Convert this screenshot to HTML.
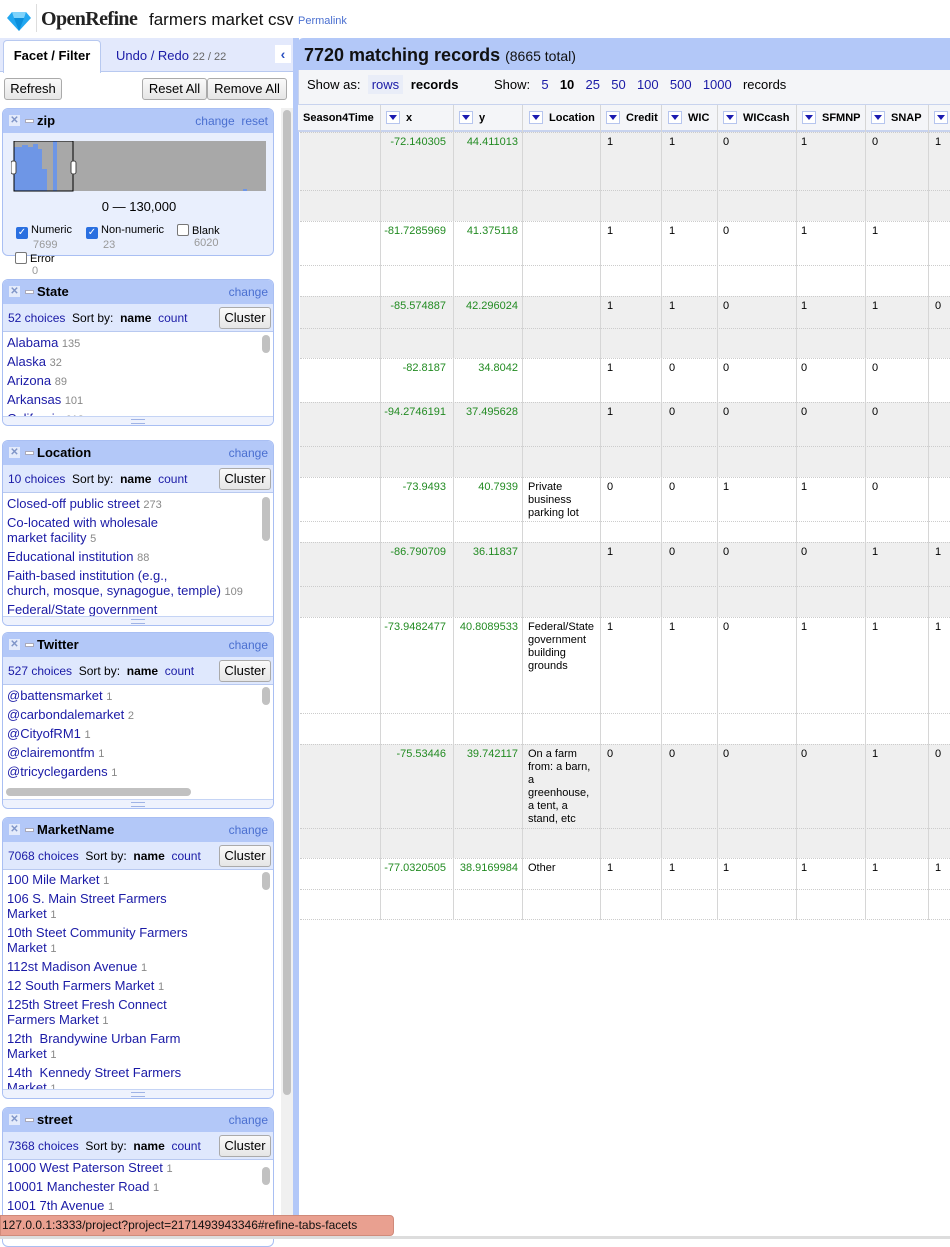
<!DOCTYPE html>
<html><head><meta charset="utf-8"><style>
*{box-sizing:border-box;margin:0;padding:0}
body{width:950px;height:1239px;overflow:hidden;background:#fff;font-family:"Liberation Sans",Arial,sans-serif;font-size:13px;color:#000;position:relative}
.a{position:absolute}
a,.lk{color:#1a1aa6;text-decoration:none}
.btn{position:absolute;height:22px;border:1px solid #aaa;border-radius:3px;background:linear-gradient(#fafafa,#e6e6e6);font-size:13px;line-height:20px;text-align:center;color:#000}
.facet{position:absolute;left:2px;width:272px;border:1px solid #a9bff3;border-radius:6px;background:#fff;overflow:hidden}
.fh{height:24px;background:#b3c8f8;position:relative;font-weight:bold;font-size:13px;line-height:24px;padding-left:34px}
.fh .x{position:absolute;left:6px;top:6px;width:11px;height:11px;background:#e4ebfb;color:#7f95c8;font-size:10px;line-height:11px;text-align:center;font-weight:bold}
.fh .m{position:absolute;left:22px;top:10px;width:9px;height:4px;background:#fff;border:1px solid #aab}
.fh .r{position:absolute;right:5px;top:0;font-weight:normal;font-size:12px;color:#4a6fd0}
.fc{height:28px;background:#dfe8fd;position:relative;font-size:12px;line-height:28px;padding-left:5px;border-bottom:1px solid #b8c9f0}
.fc .cl{position:absolute;right:2px;top:3px;width:52px;height:22px;border:1px solid #aaa;border-radius:3px;background:linear-gradient(#fafafa,#e6e6e6);text-align:center;line-height:20px;font-size:13px;color:#000}
.fl{position:relative;padding:2px 18px 0 4px;overflow:hidden;line-height:15px}
.fl div{margin:0 0 4px;color:#1a1aa6;line-height:15px}
.fl div span{color:#888;font-size:11px;line-height:0}
.vs{position:absolute;right:3px;width:8px;border-radius:4px;background:#c1c1c1;height:18px}
.grip{position:absolute;left:0;right:0;bottom:0;height:9px;background:#eef2fd;border-top:1px solid #c5d4f5}
.grip:after{content:"";position:absolute;left:128px;top:2px;width:14px;height:3px;border-top:1px solid #9fb3e6;border-bottom:1px solid #9fb3e6}
.row{position:absolute;left:300px;width:650px;border-top:1px dotted #ccc}
.g{background:#efefef}
.c{position:absolute;top:4px;font-size:11px;line-height:13px}
.gr{color:#228b22;text-align:right}
.vl{position:absolute;top:105px;height:815px;width:1px;background:#d6d6d6}
.hd{position:absolute;top:105px;height:27px;font-size:11px;font-weight:bold;line-height:27px}
.dd{display:inline-block;width:14px;height:13px;border:1px solid #b6c5ee;background:#fff;vertical-align:-3px;margin-right:6px;position:relative}
.dd:after{content:"";position:absolute;left:2px;top:3px;border-left:4px solid transparent;border-right:4px solid transparent;border-top:5px solid #1a1ab0}
</style></head><body>
<svg class="a" style="left:7px;top:11px" width="24" height="20" viewBox="0 0 24 20"><polygon points="5,1 19,1 24,7 12,20 0,7" fill="#22a7f0"/><polygon points="5,1 19,1 17,7 7,7" fill="#7fd3fb"/><polygon points="7,7 17,7 12,20" fill="#0b8fdc"/></svg>
<div class="a" style="left:36px;top:4px;height:28px;border-left:1px solid #ddd"></div>
<div class="a" style="left:41px;top:8px;font-family:'Liberation Serif',serif;font-weight:bold;font-size:20px;color:#222;letter-spacing:-0.6px">OpenRefine</div>
<div class="a" style="left:149px;top:10px;font-size:17px;color:#111">farmers market csv</div>
<div class="a" style="left:298px;top:15px;font-size:11px;color:#4a6fd0">Permalink</div>

<div class="a" style="left:0;top:38px;width:293px;height:34px;background:#e3e9fc;border-bottom:1px solid #b8c9f0"></div>
<div class="a" style="left:3px;top:40px;width:98px;height:33px;background:#fff;border:1px solid #b8c9f0;border-bottom:none;border-radius:4px 4px 0 0;font-weight:bold;font-size:13px;line-height:30px;text-align:center">Facet / Filter</div>
<div class="a" style="left:116px;top:48px;font-size:13px;color:#1a1aa6">Undo / Redo <span style="color:#666;font-size:11px">22 / 22</span></div>
<div class="a" style="left:275px;top:45px;width:16px;height:18px;background:#fff;color:#2a4fc0;font-weight:bold;font-size:14px;line-height:18px;text-align:center">&#8249;</div>
<div class="a" style="left:0;top:73px;width:293px;height:1166px;background:#fff"></div>
<div class="btn" style="left:4px;top:78px;width:58px">Refresh</div>
<div class="btn" style="left:142px;top:78px;width:65px">Reset All</div>
<div class="btn" style="left:207px;top:78px;width:80px">Remove All</div>
<div class="a" style="left:281px;top:108px;width:12px;height:1131px;background:#f0f0f0"></div>
<div class="a" style="left:283px;top:110px;width:8px;height:985px;border-radius:4px;background:#c1c1c1"></div>
<div class="a" style="left:293px;top:38px;width:6px;height:1201px;background:#b3c8f8"></div>

<div class="facet" style="top:108px;height:148px;background:#e9effd">
<div class="fh"><span class="x">✕</span><span class="m"></span>zip<span class="r">change&nbsp; reset</span></div>
<svg class="a" style="left:8px;top:32px" width="256" height="54"><rect x="3" y="0" width="252" height="50" fill="#a8a8a8"/><path d="M3,6 H11 V4 H17 V6 H22 V3 H27 V8 H31 V28 H36 V50 H3Z M42,0 V50 H46 V0Z" fill="#6e96e6"/><rect x="3" y="0" width="59" height="50" fill="none" stroke="#000" stroke-width="1"/><rect x="0" y="20" width="5" height="13" rx="2" fill="#fff" stroke="#444"/><rect x="60" y="20" width="5" height="13" rx="2" fill="#fff" stroke="#444"/><rect x="232" y="48" width="4" height="2" fill="#6e96e6"/></svg>
<div class="a" style="left:0;width:272px;top:90px;text-align:center;font-size:13px">0 — 130,000</div>
<div class="a" style="left:13px;top:115px;font-size:11px;line-height:12px"><span style="display:inline-block;width:12px;height:12px;background:#2a6fe0;border-radius:2px;color:#fff;font-size:10px;text-align:center;vertical-align:-2px">✓</span> Numeric<br><span style="color:#999;margin-left:17px">7699</span></div>
<div class="a" style="left:83px;top:115px;font-size:11px;line-height:12px"><span style="display:inline-block;width:12px;height:12px;background:#2a6fe0;border-radius:2px;color:#fff;font-size:10px;text-align:center;vertical-align:-2px">✓</span> Non-numeric<br><span style="color:#999;margin-left:17px">23</span></div>
<div class="a" style="left:174px;top:115px;font-size:11px;line-height:12px"><span style="display:inline-block;width:12px;height:12px;border:1px solid #777;border-radius:2px;background:#fff;vertical-align:-2px"></span> Blank<br><span style="color:#999;margin-left:17px">6020</span></div>
</div>
<div class="a" style="left:15px;top:252px;font-size:11px;line-height:12px"><span style="display:inline-block;width:12px;height:12px;border:1px solid #777;border-radius:2px;background:#fff;vertical-align:-2px"></span> Error<br><span style="color:#999;margin-left:17px">0</span></div>

<div class="facet" style="top:279px;height:147px">
<div class="fh"><span class="x">✕</span><span class="m"></span>State<span class="r">change</span></div>
<div class="fc"><span class="lk">52 choices</span>&nbsp; Sort by: &nbsp;<b>name</b>&nbsp; <span class="lk">count</span><span class="cl">Cluster</span></div>
<div class="fl" style="height:86px;padding-top:3px"><div>Alabama <span>135</span></div><div>Alaska <span>32</span></div><div>Arizona <span>89</span></div><div>Arkansas <span>101</span></div><div>California <span>618</span></div><span class="vs" style="top:3px"></span></div>
<div class="grip"></div></div>

<div class="facet" style="top:440px;height:186px">
<div class="fh"><span class="x">✕</span><span class="m"></span>Location<span class="r">change</span></div>
<div class="fc"><span class="lk">10 choices</span>&nbsp; Sort by: &nbsp;<b>name</b>&nbsp; <span class="lk">count</span><span class="cl">Cluster</span></div>
<div class="fl" style="height:125px;padding-top:3px"><div>Closed-off public street <span>273</span></div><div>Co-located with wholesale<br>market facility <span>5</span></div><div>Educational institution <span>88</span></div><div>Faith-based institution (e.g.,<br>church, mosque, synagogue, temple) <span>109</span></div><div>Federal/State government</div><span class="vs" style="top:4px;height:44px"></span></div>
<div class="grip"></div></div>

<div class="facet" style="top:632px;height:177px">
<div class="fh"><span class="x">✕</span><span class="m"></span>Twitter<span class="r">change</span></div>
<div class="fc"><span class="lk">527 choices</span>&nbsp; Sort by: &nbsp;<b>name</b>&nbsp; <span class="lk">count</span><span class="cl">Cluster</span></div>
<div class="fl" style="height:116px;padding-top:3px"><div>@battensmarket <span>1</span></div><div>@carbondalemarket <span>2</span></div><div>@CityofRM1 <span>1</span></div><div>@clairemontfm <span>1</span></div><div>@tricyclegardens <span>1</span></div><div>#Madewithlabels</div><span class="vs" style="top:2px"></span>
<div class="a" style="left:0;right:14px;top:100px;height:14px;background:#fff"></div><div class="a" style="left:3px;top:103px;width:185px;height:8px;border-radius:4px;background:#c1c1c1"></div></div>
<div class="grip"></div></div>

<div class="facet" style="top:817px;height:282px">
<div class="fh"><span class="x">✕</span><span class="m"></span>MarketName<span class="r">change</span></div>
<div class="fc"><span class="lk">7068 choices</span>&nbsp; Sort by: &nbsp;<b>name</b>&nbsp; <span class="lk">count</span><span class="cl">Cluster</span></div>
<div class="fl" style="height:221px;padding-top:2px"><div>100 Mile Market <span>1</span></div><div>106 S. Main Street Farmers<br>Market <span>1</span></div><div>10th Steet Community Farmers<br>Market <span>1</span></div><div>112st Madison Avenue <span>1</span></div><div>12 South Farmers Market <span>1</span></div><div>125th Street Fresh Connect<br>Farmers Market <span>1</span></div><div>12th&nbsp; Brandywine Urban Farm<br>Market <span>1</span></div><div>14th&nbsp; Kennedy Street Farmers<br>Market <span>1</span></div><span class="vs" style="top:2px"></span></div>
<div class="grip"></div></div>

<div class="facet" style="top:1107px;height:140px">
<div class="fh"><span class="x">✕</span><span class="m"></span>street<span class="r">change</span></div>
<div class="fc"><span class="lk">7368 choices</span>&nbsp; Sort by: &nbsp;<b>name</b>&nbsp; <span class="lk">count</span><span class="cl">Cluster</span></div>
<div class="fl" style="height:90px;padding-top:0"><div>1000 West Paterson Street <span>1</span></div><div>10001 Manchester Road <span>1</span></div><div>1001 7th Avenue <span>1</span></div><span class="vs" style="top:7px"></span></div>
</div>

<div class="a" style="left:298px;top:38px;width:652px;height:32px;background:#b3c8f8;border-radius:5px 0 0 0"></div>
<div class="a" style="left:304px;top:45px;font-size:18px;font-weight:bold;color:#111">7720 matching records <span style="font-weight:normal;font-size:14px">(8665 total)</span></div>
<div class="a" style="left:298px;top:70px;width:652px;height:35px;background:#f4f5f8;border-bottom:1px solid #c8d3ee;border-left:1px solid #c8d3ee"></div>
<div class="a" style="left:307px;top:78px;font-size:13px;line-height:14px">Show as: &nbsp;<span class="lk" style="background:#e9edf8;padding:2px 4px">rows</span> <b style="padding:2px 4px">records</b></div>
<div class="a" style="left:494px;top:78px;font-size:13px;line-height:14px;word-spacing:2px">Show: &nbsp;<span class="lk">5</span>&nbsp; <b>10</b>&nbsp; <span class="lk">25</span>&nbsp; <span class="lk">50</span>&nbsp; <span class="lk">100</span>&nbsp; <span class="lk">500</span>&nbsp; <span class="lk">1000</span>&nbsp; records</div>

<div class="a" style="left:298px;top:105px;width:652px;height:27px;background:#f4f5f8;border-bottom:2px solid #c8d3ee"></div>
<div class="hd" style="left:303px">Season4Time</div>
<div class="hd" style="left:386px"><span class="dd"></span>x</div>
<div class="hd" style="left:459px"><span class="dd"></span>y</div>
<div class="hd" style="left:529px"><span class="dd"></span>Location</div>
<div class="hd" style="left:606px"><span class="dd"></span>Credit</div>
<div class="hd" style="left:668px"><span class="dd"></span>WIC</div>
<div class="hd" style="left:723px"><span class="dd"></span>WICcash</div>
<div class="hd" style="left:802px"><span class="dd"></span>SFMNP</div>
<div class="hd" style="left:871px"><span class="dd"></span>SNAP</div>
<div class="hd" style="left:934px"><span class="dd"></span></div>

<div class="row g" style="top:132px;height:58px"></div><div class="row g" style="top:190px;height:31px"></div>
<div class="row" style="top:221px;height:44px"></div><div class="row" style="top:265px;height:31px"></div>
<div class="row g" style="top:296px;height:32px"></div><div class="row g" style="top:328px;height:30px"></div>
<div class="row" style="top:358px;height:44px"></div>
<div class="row g" style="top:402px;height:44px"></div><div class="row g" style="top:446px;height:31px"></div>
<div class="row" style="top:477px;height:44px"></div><div class="row" style="top:521px;height:21px"></div>
<div class="row g" style="top:542px;height:44px"></div><div class="row g" style="top:586px;height:31px"></div>
<div class="row" style="top:617px;height:96px"></div><div class="row" style="top:713px;height:31px"></div>
<div class="row g" style="top:744px;height:84px"></div><div class="row g" style="top:828px;height:30px"></div>
<div class="row" style="top:858px;height:31px"></div><div class="row" style="top:889px;height:31px;border-bottom:1px dotted #ccc"></div>

<div class="vl" style="left:380px"></div><div class="vl" style="left:453px"></div><div class="vl" style="left:522px"></div><div class="vl" style="left:600px"></div><div class="vl" style="left:661px"></div><div class="vl" style="left:717px"></div><div class="vl" style="left:796px"></div><div class="vl" style="left:865px"></div><div class="vl" style="left:928px"></div>

<div class="c gr" style="left:380px;width:66px;top:136px">-72.140305</div><div class="c gr" style="left:453px;width:65px;top:136px">44.411013</div>
<div class="c" style="left:607px;top:136px">1</div><div class="c" style="left:669px;top:136px">1</div><div class="c" style="left:723px;top:136px">0</div><div class="c" style="left:801px;top:136px">1</div><div class="c" style="left:872px;top:136px">0</div><div class="c" style="left:935px;top:136px">1</div>

<div class="c gr" style="left:380px;width:66px;top:225px">-81.7285969</div><div class="c gr" style="left:453px;width:65px;top:225px">41.375118</div>
<div class="c" style="left:607px;top:225px">1</div><div class="c" style="left:669px;top:225px">1</div><div class="c" style="left:723px;top:225px">0</div><div class="c" style="left:801px;top:225px">1</div><div class="c" style="left:872px;top:225px">1</div>

<div class="c gr" style="left:380px;width:66px;top:300px">-85.574887</div><div class="c gr" style="left:453px;width:65px;top:300px">42.296024</div>
<div class="c" style="left:607px;top:300px">1</div><div class="c" style="left:669px;top:300px">1</div><div class="c" style="left:723px;top:300px">0</div><div class="c" style="left:801px;top:300px">1</div><div class="c" style="left:872px;top:300px">1</div><div class="c" style="left:935px;top:300px">0</div>

<div class="c gr" style="left:380px;width:66px;top:362px">-82.8187</div><div class="c gr" style="left:453px;width:65px;top:362px">34.8042</div>
<div class="c" style="left:607px;top:362px">1</div><div class="c" style="left:669px;top:362px">0</div><div class="c" style="left:723px;top:362px">0</div><div class="c" style="left:801px;top:362px">0</div><div class="c" style="left:872px;top:362px">0</div>

<div class="c gr" style="left:380px;width:66px;top:406px">-94.2746191</div><div class="c gr" style="left:453px;width:65px;top:406px">37.495628</div>
<div class="c" style="left:607px;top:406px">1</div><div class="c" style="left:669px;top:406px">0</div><div class="c" style="left:723px;top:406px">0</div><div class="c" style="left:801px;top:406px">0</div><div class="c" style="left:872px;top:406px">0</div>

<div class="c gr" style="left:380px;width:66px;top:481px">-73.9493</div><div class="c gr" style="left:453px;width:65px;top:481px">40.7939</div><div class="c" style="left:528px;top:481px">Private<br>business<br>parking lot</div>
<div class="c" style="left:607px;top:481px">0</div><div class="c" style="left:669px;top:481px">0</div><div class="c" style="left:723px;top:481px">1</div><div class="c" style="left:801px;top:481px">1</div><div class="c" style="left:872px;top:481px">0</div>

<div class="c gr" style="left:380px;width:66px;top:546px">-86.790709</div><div class="c gr" style="left:453px;width:65px;top:546px">36.11837</div>
<div class="c" style="left:607px;top:546px">1</div><div class="c" style="left:669px;top:546px">0</div><div class="c" style="left:723px;top:546px">0</div><div class="c" style="left:801px;top:546px">0</div><div class="c" style="left:872px;top:546px">1</div><div class="c" style="left:935px;top:546px">1</div>

<div class="c gr" style="left:380px;width:66px;top:621px">-73.9482477</div><div class="c gr" style="left:453px;width:65px;top:621px">40.8089533</div><div class="c" style="left:528px;top:621px">Federal/State<br>government<br>building<br>grounds</div>
<div class="c" style="left:607px;top:621px">1</div><div class="c" style="left:669px;top:621px">1</div><div class="c" style="left:723px;top:621px">0</div><div class="c" style="left:801px;top:621px">1</div><div class="c" style="left:872px;top:621px">1</div><div class="c" style="left:935px;top:621px">1</div>

<div class="c gr" style="left:380px;width:66px;top:748px">-75.53446</div><div class="c gr" style="left:453px;width:65px;top:748px">39.742117</div><div class="c" style="left:528px;top:748px">On a farm<br>from: a barn,<br>a<br>greenhouse,<br>a tent, a<br>stand, etc</div>
<div class="c" style="left:607px;top:748px">0</div><div class="c" style="left:669px;top:748px">0</div><div class="c" style="left:723px;top:748px">0</div><div class="c" style="left:801px;top:748px">0</div><div class="c" style="left:872px;top:748px">1</div><div class="c" style="left:935px;top:748px">0</div>

<div class="c gr" style="left:380px;width:66px;top:862px">-77.0320505</div><div class="c gr" style="left:453px;width:65px;top:862px">38.9169984</div><div class="c" style="left:528px;top:862px">Other</div>
<div class="c" style="left:607px;top:862px">1</div><div class="c" style="left:669px;top:862px">1</div><div class="c" style="left:723px;top:862px">1</div><div class="c" style="left:801px;top:862px">1</div><div class="c" style="left:872px;top:862px">1</div><div class="c" style="left:935px;top:862px">1</div>

<div class="a" style="left:0;top:1236px;width:950px;height:3px;background:#ddd"></div>
<div class="a" style="left:0;top:1215px;width:394px;height:21px;background:#e9a090;border:1px solid #d08a7a;border-radius:0 4px 4px 0;font-size:12px;line-height:19px;padding-left:1px;color:#111">127.0.0.1:3333/project?project=2171493943346#refine-tabs-facets</div>
</body></html>
